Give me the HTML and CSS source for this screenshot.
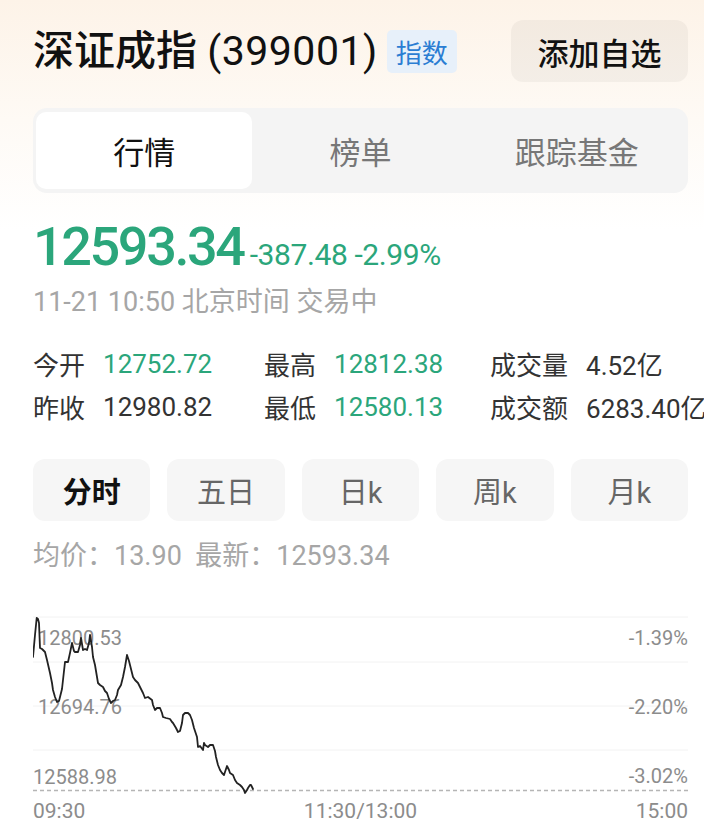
FILE: index.html
```html
<!DOCTYPE html>
<html lang="zh-CN">
<head>
    <meta charset="UTF-8">
    <meta name="viewport" content="width=device-width, initial-scale=1.0">
    <title>深证成指</title>
    <link rel="stylesheet" href="styles.css">
</head>
<body>
    <div class="header">
        <div class="titleWrap">
            <h1 class="title">深证成指 <span class="code">(399001)</span></h1>
            <span class="badge">指数</span>
        </div>
        <button class="addBtn" type="button">添加自选</button>
    </div>

    <div class="tabs">
        <div class="tab active">行情</div>
        <div class="tab">榜单</div>
        <div class="tab">跟踪基金</div>
    </div>

    <div class="priceRow">
        <span class="price">12593.34</span>
        <span class="change">-387.48 -2.99%</span>
    </div>
    <div class="timeLine">11-21 10:50 北京时间 交易中</div>

    <div class="stats">
        <div class="stat"><span class="statLabel">今开</span><span class="statValue green">12752.72</span></div>
        <div class="stat"><span class="statLabel">最高</span><span class="statValue green">12812.38</span></div>
        <div class="stat"><span class="statLabel">成交量</span><span class="statValue">4.52亿</span></div>
        <div class="stat"><span class="statLabel">昨收</span><span class="statValue">12980.82</span></div>
        <div class="stat"><span class="statLabel">最低</span><span class="statValue green">12580.13</span></div>
        <div class="stat"><span class="statLabel">成交额</span><span class="statValue">6283.40亿</span></div>
    </div>

    <div class="periods">
        <div class="period active">分时</div>
        <div class="period">五日</div>
        <div class="period">日k</div>
        <div class="period">周k</div>
        <div class="period">月k</div>
    </div>

    <div class="avgLine">均价：13.90&nbsp;&nbsp;最新：12593.34</div>

    <div class="chart">
        <svg width="655" height="192" viewBox="0 0 655 192">
            <g stroke="#f2f2f2" stroke-width="1">
                <line x1="0" y1="12" x2="655" y2="12"/>
                <line x1="0" y1="57" x2="655" y2="57"/>
                <line x1="0" y1="101" x2="655" y2="101"/>
                <line x1="0" y1="145" x2="655" y2="145"/>
            </g>
            <line x1="0" y1="185.5" x2="655" y2="185.5" stroke="#b5b5b5" stroke-width="1.5" stroke-dasharray="4 3"/>
            <g class="axisText">
                <text x="5" y="40">12800.53</text>
                <text x="5" y="109">12694.76</text>
                <text x="0" y="179">12588.98</text>
                <text x="655" y="40" text-anchor="end">-1.39%</text>
                <text x="655" y="109" text-anchor="end">-2.20%</text>
                <text x="655" y="178" text-anchor="end">-3.02%</text>
            </g>
            <polyline fill="none" stroke="#222" stroke-width="1.8" stroke-linejoin="round" stroke-linecap="round"
                points="0,52 2,30 3.7,13 5,14 6,18 7,43 9,44 12,47 14,55 17,68 19,78 20,85 22,92 24,97 26,96 27,92 29,84 30,75 31,66 32,57 35,57 37,48 39,38 41,46 42,47 45,47 47,40 48,33 50,45 52,44 54,45 56,38 57,30 59,42 60,52 62,60 65,78 67,80 70,82 72,86 74,88 76,94 78,98 80,96 82,95 84,90 85,85 88,80 90,72 92,62 94,50 96,56 99,68 100,72 102,75 105,78 107,82 110,88 112,93 115,92 119,95 120,100 122,105 124,103 127,103 129,108 130,112 133,113 137,114 139,117 140,118 143,123 145,127 147,126 149,118 150,110 152,108 155,108 157,110 159,115 161,123 164,132 165,142 167,141 170,145 171,138 172,140 175,142 177,140 180,140 182,146 183,152 185,160 187,165 189,168 191,170 193,164 194,161 196,165 197,168 200,170 202,175 204,178 207,180 209,182 211,185 212,188 214,185 215,183 217,180 218,180 220,184"/>
        </svg>
        <div class="timeAxis">
            <span>09:30</span>
            <span>11:30/13:00</span>
            <span>15:00</span>
        </div>
    </div>
</body>
</html>
```

FILE: styles.css
```css
body {
    margin: 0;
    padding: 20px 16px 0 33px;
    width: 655px;
    height: 831px;
    box-sizing: content-box;
    overflow: hidden;
    background: linear-gradient(180deg, #fdf3e8 0px, #fefaf5 120px, #ffffff 230px);
    font-family: "Roboto", "Noto Sans CJK SC", sans-serif;
    color: #222;
}

html {
    overflow: hidden;
    background: #fff;
}

.header {
    display: flex;
    align-items: center;
    justify-content: space-between;
    height: 62px;
}

.titleWrap {
    display: flex;
    align-items: center;
}

.title {
    margin: 0;
    font-size: 41px;
    font-weight: 500;
    color: #111;
    line-height: 1;
    white-space: nowrap;
}

.code {
    font-weight: 400;
    letter-spacing: 0.5px;
}

.badge {
    margin-left: 9px;
    width: 70px;
    height: 43px;
    border-radius: 5px;
    background-color: #e7f0fa;
    color: #2a7dd3;
    font-size: 26px;
    display: flex;
    align-items: center;
    justify-content: center;
}

.addBtn {
    width: 177px;
    height: 62px;
    border: none;
    border-radius: 12px;
    background-color: rgba(0, 0, 0, 0.04);
    font-family: inherit;
    font-size: 31px;
    font-weight: 500;
    color: #111;
    padding: 0;
}

.tabs {
    margin-top: 26px;
    display: flex;
    padding: 4px 3px;
    height: 85px;
    box-sizing: border-box;
    border-radius: 14px;
    background-color: #f4f4f4;
}

.tab {
    flex: 1;
    display: flex;
    align-items: center;
    justify-content: center;
    font-size: 31px;
    color: #777;
    border-radius: 10px;
}

.tab.active {
    background-color: #fff;
    color: #111;
}

.priceRow {
    margin-top: 27px;
    display: flex;
    align-items: baseline;
    line-height: 54px;
    height: 54px;
    color: #2ba67b;
}

.price {
    font-size: 54px;
    font-weight: 500;
    letter-spacing: -2.4px;
}

.change {
    margin-left: 6px;
    font-size: 30px;
    letter-spacing: -0.4px;
}

.timeLine {
    margin-top: 10px;
    font-size: 27px;
    line-height: 36px;
    color: #a6a6a6;
}

.stats {
    margin-top: 22px;
    display: grid;
    grid-template-columns: 231px 226px 200px;
    grid-auto-rows: 43px;
    font-size: 26px;
}

.stat {
    display: flex;
    align-items: center;
    white-space: nowrap;
}

.statLabel {
    color: #333;
    margin-right: 18px;
}

.statValue {
    color: #333;
}

.green {
    color: #2ba67b;
}

.periods {
    margin-top: 31px;
    display: flex;
    gap: 17px;
}

.period {
    flex: 1;
    height: 62px;
    border-radius: 12px;
    background-color: #f6f6f6;
    display: flex;
    align-items: center;
    justify-content: center;
    font-size: 29px;
    color: #666;
}

.period.active {
    color: #111;
    font-weight: 700;
}

.avgLine {
    margin-top: 17px;
    font-size: 27px;
    line-height: 36px;
    color: #a6a6a6;
}

.chart {
    margin-top: 31px;
}

.chart svg {
    display: block;
}

.axisText {
    font-family: "Roboto", sans-serif;
    font-size: 20px;
    fill: #8c8c8c;
}

.timeAxis {
    display: flex;
    justify-content: space-between;
    font-size: 21px;
    line-height: 28px;
    color: #8c8c8c;
}
```
